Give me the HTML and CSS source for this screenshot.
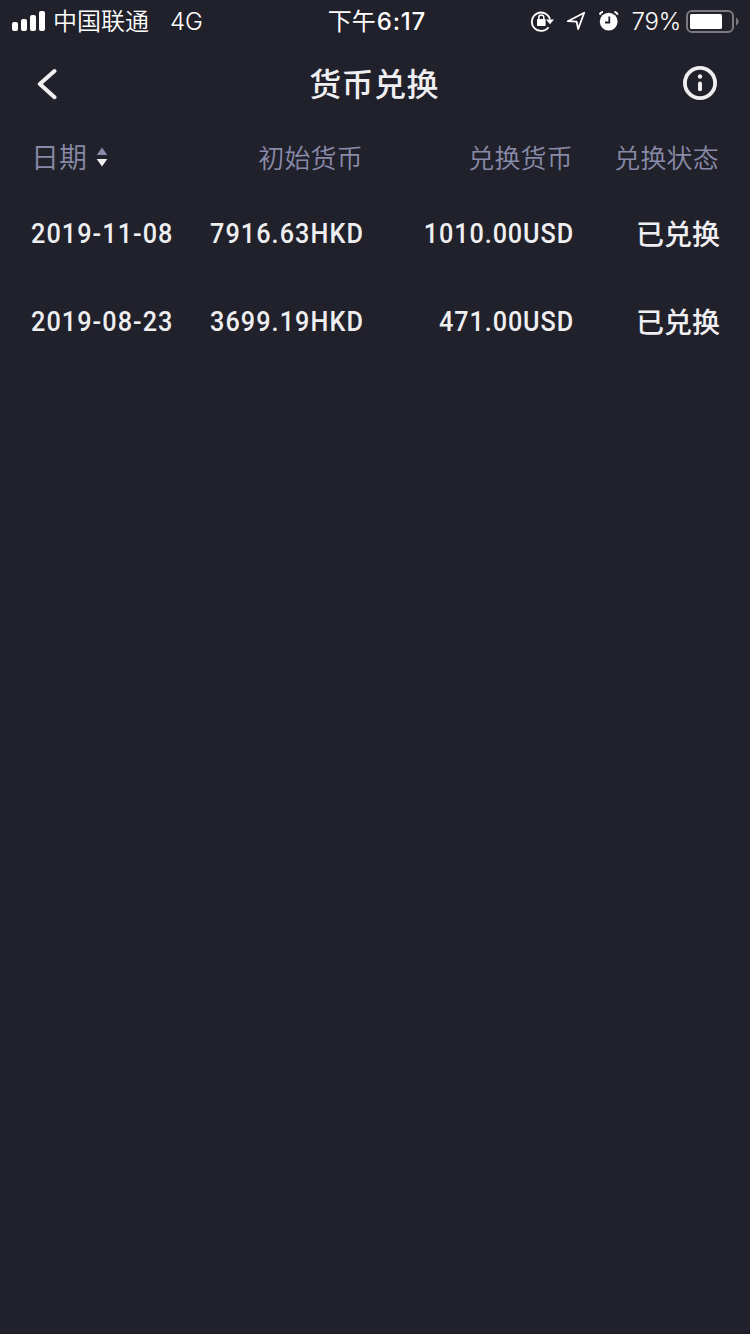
FILE: index.html
```
<!DOCTYPE html>
<html lang="zh-CN">
<head>
  <meta charset="utf-8">
  <title>货币兑换</title>
  <link rel="stylesheet" href="styles.css">
</head>
<body>
  <div class="status-bar">
    <div class="status-left">
      <svg class="signal" width="34" height="20" viewBox="0 0 34 20">
        <rect x="0" y="11" width="6" height="9" rx="2"/>
        <rect x="9" y="8" width="6" height="12" rx="2"/>
        <rect x="18" y="4" width="6" height="16" rx="2"/>
        <rect x="27" y="0" width="6" height="20" rx="2"/>
      </svg>
      <span class="carrier">中国联通</span>
      <span class="network">4G</span>
    </div>
    <div class="clock">下午<span class="clock-time">6:17</span></div>
    <div class="status-right">
      <svg class="lock" width="24" height="22" viewBox="0 0 24 22">
        <path d="M17.5 17.2A9.200 9.200 0 1 1 19 9.500" fill="none" stroke="#fff" stroke-width="1.800"/>
        <path d="M15 9.600h8l-4 4.600z"/>
        <rect x="6" y="9" width="8.600" height="7" rx=".8"/>
        <path d="M7.800 9.500V7.400a2.500 2.500 0 0 1 5 0v2.100" fill="none" stroke="#fff" stroke-width="1.500"/>
      </svg>
      <svg class="location" width="20" height="20" viewBox="0 0 20 20">
        <path d="M1.800 10.200L18.200 1.800 12.200 18 10.600 10.600z" fill="none" stroke="#fff" stroke-width="1.800" stroke-linejoin="round"/>
      </svg>
      <svg class="alarm" width="20" height="20" viewBox="0 0 20 20">
        <circle cx="9.700" cy="10.600" r="8.900"/>
        <path d="M.6 3.600Q1.600 1.400 4 .8M18.800 3.600Q17.800 1.400 15.400 .8" fill="none" stroke="#fff" stroke-width="2"/>
        <path d="M10.300 5.500v6H6" fill="none" stroke="#21212b" stroke-width="1.800"/>
      </svg>
      <span class="percent">79%</span>
      <svg class="battery" width="54" height="24" viewBox="0 0 54 24">
        <rect x="1" y="2" width="46" height="21" rx="5" fill="none" stroke="#7a7a80" stroke-width="2"/>
        <rect x="4" y="5" width="32" height="15" rx="1.500"/>
        <path d="M50 8.500c3.400 1.500 3.400 6.500 0 8z" fill="#7a7a80"/>
      </svg>
    </div>
  </div>

  <header class="nav">
    <a class="back" href="#">
      <svg width="24" height="34" viewBox="0 0 24 34">
        <path d="M19.500 5L4.800 18 19.500 31.200" fill="none" stroke="#efeff1" stroke-width="4" stroke-linecap="round" stroke-linejoin="round"/>
      </svg>
    </a>
    <h1>货币兑换</h1>
    <a class="info" href="#">
      <svg width="34" height="34" viewBox="0 0 34 34">
        <circle cx="17" cy="17" r="15.100" fill="none" stroke="#efeff1" stroke-width="3.800"/>
        <circle cx="17" cy="10.500" r="2.200" fill="#efeff1"/>
        <path d="M17 17.500v5.800" stroke="#efeff1" stroke-width="4" stroke-linecap="round"/>
      </svg>
    </a>
  </header>

  <main class="records">
    <div class="row row-head">
      <span class="date">日期
        <svg class="sort" width="12" height="20" viewBox="0 0 12 20">
          <path d="M6 .5l5.300 7.500H.7z" fill="#888aa8"/>
          <path d="M6 19.500l5.300-7.500H.7z" fill="#efeff1"/>
        </svg>
      </span>
      <span class="from">初始货币</span>
      <span class="to">兑换货币</span>
      <span class="state">兑换状态</span>
    </div>
    <div class="row">
      <span class="date num">2019-11-08</span>
      <span class="from num">7916.63HKD</span>
      <span class="to num">1010.00USD</span>
      <span class="state">已兑换</span>
    </div>
    <div class="row">
      <span class="date num">2019-08-23</span>
      <span class="from num">3699.19HKD</span>
      <span class="to num">471.00USD</span>
      <span class="state">已兑换</span>
    </div>
  </main>
</body>
</html>
```
FILE: styles.css
```
* {
  box-sizing: border-box;
}
body {
  margin: 0;
  min-height: 1334px;
  background-color: #21212b;
  border-bottom: 1px solid #24182a;
  color: #efeff1;
  font-family: Roboto, "Noto Sans CJK SC", sans-serif;
}
svg {
  display: block;
  flex: none;
}
.status-bar {
  display: grid;
  grid-template-columns: 1fr auto 1fr;
  align-items: center;
  height: 40px;
  padding: 0 10px 0 12px;
  color: #fff;
  font-family: Inter, "Noto Sans CJK SC", sans-serif;
  font-size: 24px;
  line-height: 38px;
  white-space: nowrap;
}
.status-bar svg {
  fill: #fff;
}
.status-left,
.status-right {
  display: flex;
  align-items: center;
}
.status-right {
  justify-content: flex-end;
}
.carrier,
.network,
.clock,
.percent {
  padding-top: 3px;
}
.carrier {
  margin-left: 7px;
  font-weight: 350;
}
.network {
  margin-left: 21px;
  font-weight: 350;
}
.clock {
  padding-left: 2px;
}
.clock-time {
  margin-left: 1px;
  font-weight: 550;
  letter-spacing: 0.8px;
}
.location {
  margin-left: 11px;
}
.alarm {
  margin-left: 13px;
}
.percent {
  margin: 0 5px 0 12px;
  font-weight: 350;
  letter-spacing: -0.2px;
}
.nav {
  display: flex;
  align-items: center;
  justify-content: space-between;
  height: 86px;
  padding: 0 33px 0 35px;
}
.nav h1 {
  margin: 0 0 2px 6px;
  font-size: 32px;
  font-weight: 500;
  letter-spacing: 0.4px;
}
.row {
  display: grid;
  grid-template-columns: 150px 182px 210px 147px;
  align-items: center;
  height: 88px;
  padding: 0 0 2px 31px;
  font-size: 28px;
  font-weight: 500;
  text-align: right;
  white-space: nowrap;
}
.row-head {
  grid-template-columns: 150px 182px 210px 146px;
  height: 64px;
  padding-bottom: 4px;
  color: #888aa8;
  font-size: 26px;
  font-weight: 350;
  letter-spacing: 0.2px;
}
.date {
  display: flex;
  align-items: center;
  text-align: left;
}
.row-head .date {
  font-size: 28px;
  letter-spacing: 0;
}
.sort {
  margin: 2px 0 0 9px;
}
/* condensed figures */
.num {
  margin-right: -1px;
  letter-spacing: 1.2px;
  transform: scaleX(0.9);
  transform-origin: right;
}
.date.num {
  transform-origin: left;
}
.to.num {
  letter-spacing: 1px;
}
```
